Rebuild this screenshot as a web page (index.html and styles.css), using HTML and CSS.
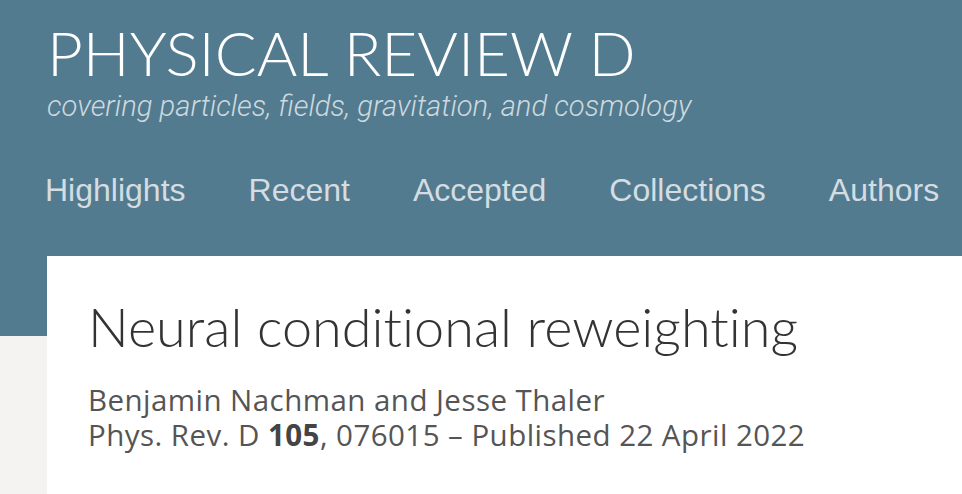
FILE: index.html
```html
<!DOCTYPE html>
<html>
<head>
    <meta charset="utf-8">
    <title>Neural conditional reweighting - Physical Review D</title>
    <link rel="stylesheet" href="styles.css">
</head>
<body>
    <header class="masthead">
        <div class="brand">
            <h1 class="brand-title">PHYSICAL REVIEW D</h1>
            <p class="brand-tagline">covering particles, fields, gravitation, and cosmology</p>
        </div>
        <nav class="main-nav">
            <a href="#">Highlights</a>
            <a href="#">Recent</a>
            <a href="#">Accepted</a>
            <a href="#">Collections</a>
            <a href="#">Authors</a>
        </nav>
    </header>

    <main class="article-card">
        <h2 class="article-title">Neural conditional reweighting</h2>
        <p class="article-authors">Benjamin Nachman and Jesse Thaler</p>
        <p class="article-cite">Phys. Rev. D <b>105</b>, 076015 &ndash; Published 22 April 2022</p>
    </main>
</body>
</html>
```

FILE: styles.css
```css
body, html {
    margin: 0;
    height: 100%;
    overflow: hidden;
    background-color: #f4f3f1;
}
.masthead {
    background-color: #537b8f;
    padding: 22px 0 80px 0;
    height: 234px;
    box-sizing: content-box;
}
.brand {
    padding-left: 47px;
}
.brand-title {
    margin: 0;
    font-family: Lato, sans-serif;
    font-weight: 300;
    font-size: 62px;
    line-height: 60px;
    color: #fff;
}
.brand-tagline {
    margin: 6px 0 0 0;
    font-family: Roboto, sans-serif;
    font-weight: 300;
    font-style: italic;
    font-size: 29.2px;
    line-height: 36px;
    color: #cdd9df;
}
.main-nav {
    display: flex;
    gap: 63px;
    padding-left: 45px;
    margin-top: 46px;
}
.main-nav a {
    font-family: "Liberation Sans", Arial, sans-serif;
    font-size: 32px;
    line-height: 40px;
    color: #d3dde2;
    text-decoration: none;
}
.article-card {
    background-color: #fff;
    margin: -80px 0 0 47px;
    padding: 38px 0 0 41px;
    height: 400px;
}
.article-title {
    margin: 0;
    font-family: Lato, sans-serif;
    font-weight: 300;
    font-size: 54px;
    line-height: 66px;
    font-variant-ligatures: none;
    color: #333;
}
.article-authors, .article-cite {
    margin: 0;
    font-family: "Open Sans", sans-serif;
    font-size: 29.5px;
    line-height: 35px;
    letter-spacing: 0.45px;
    color: #555;
}
.article-authors {
    margin-top: 22px;
}
.article-cite b {
    font-weight: 700;
    color: #444;
}
```
